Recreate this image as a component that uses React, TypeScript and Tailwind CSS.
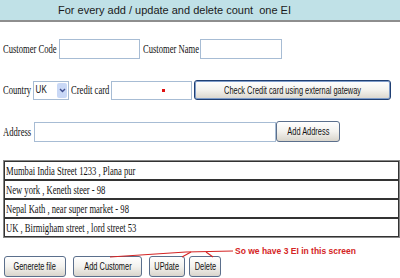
import React from 'react';

const serif = "font-['Liberation_Serif',serif]";
const sans = "font-['Liberation_Sans',Arial,sans-serif]";

function Label({ className, children }: { className: string; children: React.ReactNode }) {
  return (
    <span className={`${className} shrink-0 text-[13px] leading-[20px] text-[#111] ${serif}`}>
      <span className="inline-block origin-left scale-x-[0.66] whitespace-nowrap">{children}</span>
    </span>
  );
}

function Btn({ className, children }: { className: string; children: React.ReactNode }) {
  return (
    <button
      className={`${className} shrink-0 flex items-center justify-center rounded-[3px] border bg-gradient-to-b from-white via-[#f3f2ee] to-[#d9d5cc] text-[10px] text-[#111] ${sans}`}
    >
      <span className="inline-block scale-x-[0.74] whitespace-nowrap">{children}</span>
    </button>
  );
}

const addresses = [
  'Mumbai India Street 1233 , Plana pur',
  'New york , Keneth steer - 98',
  'Nepal Kath , near super market - 98',
  'UK , Birmigham street , lord street 53',
];

export default function App() {
  return (
    <div className="relative w-[400px] h-[278px] overflow-hidden bg-white">
      <div className={`h-[22px] bg-[#c0e1e7] border-b-2 border-[#8e8e8e] pl-[58px] text-[11px] leading-[20px] text-[#1a1a1a] ${sans}`}>
        For every add / update and delete count&nbsp; one EI
      </div>

      <div className="mt-[17px] flex items-center pl-[3px] h-[20px]">
        <Label className="w-[56px]">Customer Code</Label>
        <div className="w-[81px] h-[20px] border border-[#a7bcd4] bg-white" />
        <Label className="ml-[3px] w-[57px]">Customer Name</Label>
        <div className="w-[82px] h-[20px] border border-[#a7bcd4] bg-white" />
      </div>

      <div className="mt-[21px] flex items-center pl-[3px] h-[20px]">
        <Label className="w-[30px]">Country</Label>
        <div className={`w-[36px] h-[19px] border border-[#a7bcd4] bg-white flex items-center justify-between ${sans}`}>
          <span className="pl-[2px] text-[10px] leading-none text-[#111] inline-block scale-x-[0.8] origin-left">UK</span>
          <span className="mr-[1px] w-[10px] h-[15px] bg-[#c9d8f6] rounded-[2px] flex items-center justify-center">
            <svg width="7" height="5" viewBox="0 0 7 5">
              <path d="M1 1 L3.5 3.5 L6 1" fill="none" stroke="#3f4f8f" strokeWidth="1.4" />
            </svg>
          </span>
        </div>
        <Label className="ml-[2px] w-[40px]">Credit card</Label>
        <div className="w-[81px] h-[19px] border border-[#a7bcd4] bg-white flex items-center pl-[50px]">
          <span className="w-[3px] h-[3px] bg-[#e01010]" />
        </div>
        <Btn className="ml-[2px] w-[197px] h-[20px] border-[#1f3f73] shadow-[inset_0_0_0_1px_#7e9cc9]">
          Check Credit card using external gateway
        </Btn>
      </div>

      <div className="mt-[21px] flex items-center pl-[3px] h-[21px]">
        <Label className="w-[31px]">Address</Label>
        <div className="w-[242px] h-[20px] border border-[#a7bcd4] bg-white" />
        <Btn className="w-[64px] h-[21px] border-[#5b6f8c]">Add Address</Btn>
      </div>

      <div className="mt-[18px] ml-[3px] w-[397px] border border-[#888]">
        {addresses.map((a) => (
          <div key={a} className="h-[19px] border border-[#333] flex items-center pl-[1px]">
            <span className={`text-[13px] leading-[17px] text-[#111] ${serif} inline-block origin-left scale-x-[0.66] whitespace-nowrap`}>
              {a}
            </span>
          </div>
        ))}
      </div>

      <div className="mt-[18px] flex items-center pl-[4px] h-[21px]">
        <Btn className="w-[62px] h-[21px] border-[#5b6f8c]">Generete file</Btn>
        <Btn className="ml-[7px] w-[69px] h-[21px] border-[#5b6f8c]">Add Customer</Btn>
        <Btn className="ml-[7px] w-[36px] h-[21px] border-[#5b6f8c]">UPdate</Btn>
        <Btn className="ml-[4px] w-[32px] h-[21px] border-[#5b6f8c]">Delete</Btn>
      </div>

      <svg className="absolute left-0 top-0 pointer-events-none" width="400" height="278">
        <polyline points="110,257 186,252 233,251" fill="none" stroke="#d42424" strokeWidth="1.1" />
        <line x1="182" y1="257" x2="191" y2="252" stroke="#d42424" strokeWidth="1.1" />
        <line x1="213" y1="257" x2="206" y2="252" stroke="#d42424" strokeWidth="1.1" />
      </svg>
      <div className={`absolute left-[235px] top-[246px] text-[8.5px] leading-[11px] font-bold text-[#d42424] ${sans}`}>
        So we have 3 EI in this screen
      </div>
    </div>
  );
}
